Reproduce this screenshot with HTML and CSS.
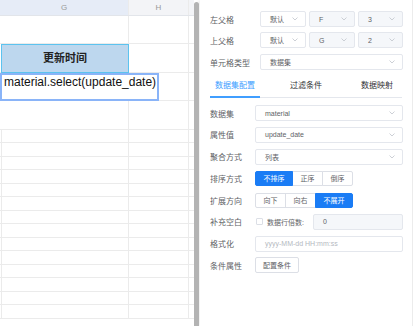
FILE: index.html
```html
<!DOCTYPE html>
<html lang="zh-CN">

<head>
    <meta charset="UTF-8">
    <meta name="viewport" content="width=device-width, initial-scale=1.0">
    <title>报表设计</title>
    <link rel="stylesheet" href="styles.css">
</head>

<body>
    <div class="sheet">
        <div class="grid">
            <div class="row head">
                <div class="c g active-col">G</div>
                <div class="c h">H</div>
                <div class="c x"></div>
            </div>
            <div class="row r28"><div class="c g"></div><div class="c h"></div><div class="c x"></div></div>
            <div class="row r29"><div class="c g title">更新时间</div><div class="c h"></div><div class="c x"></div></div>
            <div class="row r28"><div class="c g"></div><div class="c h"></div><div class="c x"></div></div>
            <div class="row r29"><div class="c g"></div><div class="c h"></div><div class="c x"></div></div>
            <div class="row thin"><div class="c g"></div><div class="c h"></div><div class="c x"></div></div>
            <div class="row thin"><div class="c g"></div><div class="c h"></div><div class="c x"></div></div>
            <div class="row thin"><div class="c g"></div><div class="c h"></div><div class="c x"></div></div>
            <div class="row thin"><div class="c g"></div><div class="c h"></div><div class="c x"></div></div>
            <div class="row thin"><div class="c g"></div><div class="c h"></div><div class="c x"></div></div>
            <div class="row thin"><div class="c g"></div><div class="c h"></div><div class="c x"></div></div>
            <div class="row thin"><div class="c g"></div><div class="c h"></div><div class="c x"></div></div>
            <div class="row thin"><div class="c g"></div><div class="c h"></div><div class="c x"></div></div>
            <div class="row thin"><div class="c g"></div><div class="c h"></div><div class="c x"></div></div>
            <div class="row thin"><div class="c g"></div><div class="c h"></div><div class="c x"></div></div>
            <div class="row thin"><div class="c g"></div><div class="c h"></div><div class="c x"></div></div>
            <div class="row thin"><div class="c g"></div><div class="c h"></div><div class="c x"></div></div>
            <div class="row thin"><div class="c g"></div><div class="c h"></div><div class="c x"></div></div>
            <div class="row thin"><div class="c g"></div><div class="c h"></div><div class="c x"></div></div>
        </div>
        <!-- 当前编辑单元格 -->
        <div class="editor">material.select(update_date)</div>
        <div class="scrollbar"></div>
    </div>

    <div class="panel">
        <div class="prow">
            <span class="plabel">左父格</span>
            <div class="select w46"><span>默认</span><svg class="caret" viewBox="0 0 6 4"><polyline points="0.5,0.5 3,3 5.5,0.5"/></svg></div>
            <div class="select w46 disabled"><span>F</span><svg class="caret" viewBox="0 0 6 4"><polyline points="0.5,0.5 3,3 5.5,0.5"/></svg></div>
            <div class="select w45 disabled"><span>3</span><svg class="caret" viewBox="0 0 6 4"><polyline points="0.5,0.5 3,3 5.5,0.5"/></svg></div>
        </div>
        <div class="prow">
            <span class="plabel">上父格</span>
            <div class="select w46"><span>默认</span><svg class="caret" viewBox="0 0 6 4"><polyline points="0.5,0.5 3,3 5.5,0.5"/></svg></div>
            <div class="select w46 disabled"><span>G</span><svg class="caret" viewBox="0 0 6 4"><polyline points="0.5,0.5 3,3 5.5,0.5"/></svg></div>
            <div class="select w45 disabled"><span>2</span><svg class="caret" viewBox="0 0 6 4"><polyline points="0.5,0.5 3,3 5.5,0.5"/></svg></div>
        </div>
        <div class="prow type-row">
            <span class="plabel">单元格类型</span>
            <div class="select w143"><span>数据集</span><svg class="caret" viewBox="0 0 6 4"><polyline points="0.5,0.5 3,3 5.5,0.5"/></svg></div>
        </div>

        <div class="tabs">
            <span class="tab active">数据集配置</span>
            <span class="tab second">过滤条件</span>
            <span class="tab third">数据映射</span>
        </div>

        <div class="form">
            <div class="frow">
                <span class="flabel">数据集</span>
                <div class="select w148"><span>material</span><svg class="caret" viewBox="0 0 6 4"><polyline points="0.5,0.5 3,3 5.5,0.5"/></svg></div>
            </div>
            <div class="frow">
                <span class="flabel">属性值</span>
                <div class="select w148"><span>update_date</span><svg class="caret" viewBox="0 0 6 4"><polyline points="0.5,0.5 3,3 5.5,0.5"/></svg></div>
            </div>
            <div class="frow">
                <span class="flabel">聚合方式</span>
                <div class="select w148"><span>列表</span><svg class="caret" viewBox="0 0 6 4"><polyline points="0.5,0.5 3,3 5.5,0.5"/></svg></div>
            </div>
            <div class="frow">
                <span class="flabel">排序方式</span>
                <div class="btns">
                    <span class="btn on">不排序</span>
                    <span class="btn">正序</span>
                    <span class="btn">倒序</span>
                </div>
            </div>
            <div class="frow">
                <span class="flabel">扩展方向</span>
                <div class="btns">
                    <span class="btn">向下</span>
                    <span class="btn">向右</span>
                    <span class="btn on">不展开</span>
                </div>
            </div>
            <div class="frow">
                <span class="flabel">补充空白</span>
                <span class="check"></span>
                <span class="check-text">数据行倍数:</span>
                <div class="input disabled w90">0</div>
            </div>
            <div class="frow">
                <span class="flabel">格式化</span>
                <div class="input w148 placeholder">yyyy-MM-dd HH:mm:ss</div>
            </div>
            <div class="frow">
                <span class="flabel">条件属性</span>
                <span class="plain-btn">配置条件</span>
            </div>
        </div>
    </div>
</body>

</html>
```

FILE: styles.css
```css
body {
    margin: 0;
    width: 418px;
    height: 326px;
    overflow: hidden;
    display: flex;
    background: #fff;
    font-family: "Liberation Sans", "Noto Sans CJK SC", sans-serif;
}

/* 左侧表格 */
.sheet {
    position: relative;
    width: 200px;
    height: 326px;
    display: flex;
    flex-shrink: 0;
}

.grid {
    width: 194px;
}

.row {
    display: flex;
    box-sizing: border-box;
    border-bottom: 1px solid #ebebeb;
}

.c {
    box-sizing: border-box;
    height: 100%;
    border-right: 1px solid #ebebeb;
}

.g {
    width: 129px;
}

.h {
    width: 60px;
}

.x {
    width: 5px;
    border-right: none;
}

.head {
    height: 16px;
    background: #f3f4f7;
    border-bottom-color: #e2e5ea;
}

.head .c {
    font-size: 8px;
    color: #9a9a9a;
    text-align: center;
    line-height: 15px;
}

.head .active-col {
    background: #e6ecf7;
}

.r28 {
    height: 28px;
}

.r29 {
    height: 29px;
}

.thin {
    height: 14px;
}

.thin:nth-child(even) {
    height: 13px;
}

.thin .g {
    margin-left: 1px;
    width: 128px;
    border-left: 1px solid #ebebeb;
}

.title {
    margin-left: 1px;
    width: 128px;
    height: 29px;
    border: 1px solid #5cc3ef;
    background: #bdd7ee;
    font-size: 11px;
    font-weight: bold;
    color: #222;
    text-align: center;
    line-height: 27px;
}

.editor {
    position: absolute;
    left: 0;
    top: 73px;
    width: 159px;
    height: 28px;
    box-sizing: border-box;
    border: 2px solid #8ab4f8;
    background: #fff;
    padding: 0 0 0 2px;
    font-size: 12px;
    line-height: 15px;
    color: #111;
    white-space: nowrap;
}

.scrollbar {
    width: 5px;
    margin-top: 2px;
    background: #b3b3b3;
    border-radius: 3px 3px 0 0;
}

/* 右侧属性面板 */
.panel {
    width: 213px;
    height: 326px;
    box-sizing: border-box;
    padding: 11px 0 0 10px;
    border-right: 1px solid #ececec;
    box-shadow: -2px 0 3px rgba(0, 0, 0, 0.06);
    background: #fff;
    flex-shrink: 0;
}

.prow {
    display: flex;
    align-items: center;
    gap: 3px;
    height: 16px;
}

.prow + .prow {
    margin-top: 5px;
}

.prow.type-row {
    margin-top: 6px;
}

.plabel {
    width: 47px;
    font-size: 8px;
    color: #606266;
}

.select,
.input {
    height: 16px;
    box-sizing: border-box;
    border: 1px solid #e4e7ed;
    border-radius: 2px;
    display: flex;
    align-items: center;
    justify-content: space-between;
    padding: 0 7px 0 9px;
    font-size: 7px;
    color: #606266;
    background: #fff;
}

.disabled {
    background: #f5f7fa;
}

.caret {
    width: 6px;
    height: 4px;
    fill: none;
    stroke: #c0c4cc;
    stroke-width: 0.8;
}

.w46 {
    width: 46px;
}

.w45 {
    width: 45px;
}

.w143 {
    width: 143px;
}

.w148 {
    width: 148px;
}

.w90 {
    width: 90px;
    margin-left: auto;
}

.tabs {
    width: 192px;
    height: 28px;
    box-sizing: border-box;
    display: flex;
    border-bottom: 1px solid #e4e7ed;
}

.tab {
    padding: 10px 5px 0;
    font-size: 8px;
    line-height: 12px;
    color: #303133;
}

.tab.second {
    margin-left: 25px;
}

.tab.third {
    margin-left: 29px;
}

.tab.active {
    color: #409eff;
    border-bottom: 2px solid #409eff;
    margin-bottom: -1px;
}

.form {
    margin-top: 7px;
    display: flex;
    flex-direction: column;
    gap: 5.75px;
}

.frow {
    display: flex;
    align-items: center;
    width: 193px;
    height: 16px;
}

.flabel {
    width: 45px;
    flex-shrink: 0;
    font-size: 8px;
    color: #606266;
}

.btns {
    display: flex;
}

.btn {
    height: 15px;
    box-sizing: border-box;
    display: flex;
    align-items: center;
    padding: 0 7.5px;
    border: 1px solid #dcdfe6;
    font-size: 7px;
    color: #606266;
    background: #fff;
}

.btn + .btn {
    margin-left: -1px;
}

.btn:first-child {
    border-radius: 2px 0 0 2px;
}

.btn:last-child {
    border-radius: 0 2px 2px 0;
}

.btn.on {
    background: #1a7cf5;
    border-color: #1a7cf5;
    color: #fff;
    position: relative;
}

.check {
    width: 7px;
    height: 7px;
    margin-left: 1px;
    border: 1px solid #dcdfe6;
    border-radius: 1px;
    box-sizing: border-box;
}

.check-text {
    margin-left: 4px;
    font-size: 7px;
    color: #606266;
}

.placeholder {
    color: #b4b8c0;
}

.plain-btn {
    height: 16px;
    box-sizing: border-box;
    display: flex;
    align-items: center;
    padding: 0 7px;
    border: 1px solid #dcdfe6;
    border-radius: 2px;
    font-size: 7px;
    color: #606266;
}
```
